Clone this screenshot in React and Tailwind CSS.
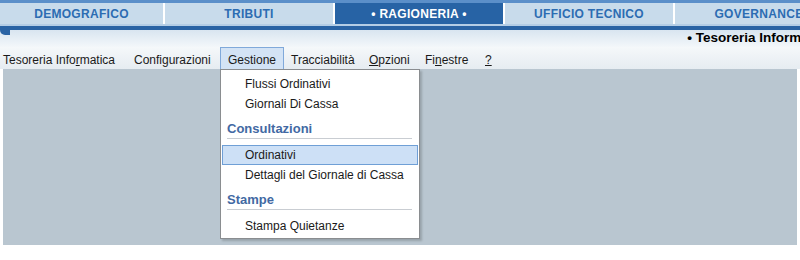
import React from "react";

const tabs = [
  { label: "DEMOGRAFICO", w: "w-[163px]" },
  { label: "TRIBUTI", w: "w-[168px]" },
  { label: "• RAGIONERIA •", w: "w-[168px]", active: true },
  { label: "UFFICIO TECNICO", w: "w-[168px]" },
  { label: "GOVERNANCE", w: "w-[168px]" },
];

const menu = [
  { label: "Tesoreria Informatica", u: 14, w: "w-[131px]" },
  { label: "Configurazioni", w: "w-[86px]" },
  { label: "Gestione", open: true },
  { label: "Tracciabilità", w: "w-[78px] ml-[7px]" },
  { label: "Opzioni", u: 0, w: "w-[56px]" },
  { label: "Finestre", u: 2, w: "w-[60px]" },
  { label: "?", u: 0, w: "w-[20px]" },
];

function Label({ text, u }) {
  if (u === undefined) return text;
  return (
    <>
      {text.slice(0, u)}
      <span className="underline">{text[u]}</span>
      {text.slice(u + 1)}
    </>
  );
}

function Item({ children, active }) {
  return (
    <div
      className={
        active
          ? "h-5 mx-[1px] flex items-center pl-[22px] bg-[#cde0f6] border border-[#6f9fd6]"
          : "h-5 flex items-center pl-[24px]"
      }
    >
      {children}
    </div>
  );
}

function Header({ children }) {
  return (
    <div>
      <div className="h-[24px] flex items-end pl-[6px] pb-[3px] leading-none font-bold text-[13px] text-[#4269a3]">
        {children}
      </div>
      <div className="h-px bg-[#c9cdd2] ml-[6px] mr-[7px] mb-[6px]" />
    </div>
  );
}

export default function App() {
  return (
    <div className="w-[800px] h-[260px] bg-white overflow-hidden font-['Liberation_Sans',Arial,sans-serif] text-[12px] text-[#1a1a1a]">
      {/* top tabs */}
      <div className="border-t-[3px] border-[#5b8fc9]">
        <div className="flex gap-[2px] bg-white w-[900px]">
          {tabs.map((t) => (
            <div
              key={t.label}
              className={
                t.active
                  ? `${t.w} h-[21px] shrink-0 flex items-center justify-center bg-[#2763a5] text-white font-bold text-[12px] tracking-[0.3px]`
                  : `${t.w} h-[21px] shrink-0 flex items-center justify-center bg-[#c8dbeb] text-[#2c6cb2] font-bold text-[12px] tracking-[0.3px]`
              }
            >
              {t.label}
            </div>
          ))}
        </div>
      </div>
      <div className="h-[2px] bg-[#b4cde5]" />
      <div className="h-[4px] bg-[#2a63a4]" />

      {/* header strip */}
      <div className="relative h-[17px] bg-gradient-to-b from-[#d9e5f0] to-[#f3f7fa] flex justify-end items-center">
        <div className="absolute left-0 top-0 w-[10px] h-[5px] bg-[#2a63a4] rounded-bl-[10px]" />
        <span className="font-bold text-[13.5px] text-black whitespace-nowrap -mr-[32px]">
          • Tesoreria Informatica
        </span>
      </div>

      {/* menu bar */}
      <div className="relative">
        <div className="h-[22px] flex items-stretch bg-gradient-to-b from-[#f5f8fa] to-[#e6ecf1] pl-[3px]">
          {menu.map((m) => (
            <div
              key={m.label}
              className={
                m.open
                  ? "w-[64px] shrink-0 flex items-center justify-center pt-[2px] bg-[#d3e3f5] border border-[#80a9da] border-b-0"
                  : `${m.w} shrink-0 flex items-center pt-[3px]`
              }
            >
              <span className="whitespace-nowrap">
                <Label text={m.label} u={m.u} />
              </span>
            </div>
          ))}
        </div>

        <div className="mx-[3px] h-[176px] bg-[#b9c6d0]" />

        {/* dropdown */}
        <div className="absolute left-[220px] top-[22px] w-[200px] bg-white border border-[#8a8d90] shadow-[2px_2px_2px_rgba(0,0,0,0.18)] pt-[4px] pb-[2px]">
          <Item>Flussi Ordinativi</Item>
          <Item>Giornali Di Cassa</Item>
          <Header>Consultazioni</Header>
          <Item active>Ordinativi</Item>
          <Item>Dettagli del Giornale di Cassa</Item>
          <Header>Stampe</Header>
          <Item>Stampa Quietanze</Item>
        </div>
      </div>
    </div>
  );
}
